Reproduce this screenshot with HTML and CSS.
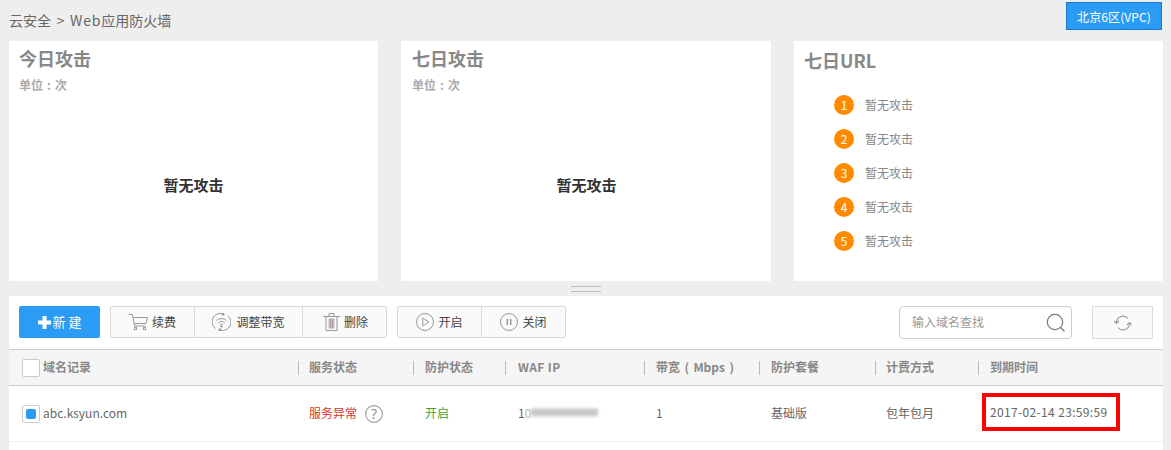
FILE: index.html
```html
<!DOCTYPE html>
<html lang="zh-CN">
<head>
<meta charset="utf-8">
<title>Web应用防火墙</title>
<link rel="stylesheet" href="styles.css">
</head>
<body>
<header class="topbar">
  <div class="crumbs">云安全 <span class="crumb-gt">&gt;</span> <span class="crumb-latin">Web</span>应用防火墙</div>
  <button class="region">北京6区(VPC)</button>
</header>
<section class="cards">
  <article class="card">
    <h2 class="card-title">今日攻击</h2>
    <div class="unit">单位<span class="colon">:</span>次</div>
    <div class="empty">暂无攻击</div>
  </article>
  <article class="card">
    <h2 class="card-title">七日攻击</h2>
    <div class="unit">单位<span class="colon">:</span>次</div>
    <div class="empty">暂无攻击</div>
  </article>
  <article class="card">
    <h2 class="card-title card-title-url">七日URL</h2>
    <ol class="rank">
      <li class="rank-item"><span class="rank-no">1</span>暂无攻击</li>
      <li class="rank-item"><span class="rank-no">2</span>暂无攻击</li>
      <li class="rank-item"><span class="rank-no">3</span>暂无攻击</li>
      <li class="rank-item"><span class="rank-no">4</span>暂无攻击</li>
      <li class="rank-item"><span class="rank-no">5</span>暂无攻击</li>
    </ol>
  </article>
</section>
<div class="splitter"></div>
<section class="panel">
  <div class="toolbar">
    <button class="btn-new"><svg class="plus" viewBox="0 0 13 13"><path d="M4.5 0h4v4.5H13v4H8.500V13h-4V8.500H0v-4h4.500z"/></svg>新 建</button>
    <div class="group">
      <button class="tool tool-a">
        <svg class="ico" width="19" height="16" viewBox="0 0 19 16" fill="none" stroke="#999" stroke-width="1"><path d="M0 .5h3.500l2 11.500h11M4 3.500h14.500l-1.500 6H5"/><rect x="5.500" y="13.500" width="2" height="2"/><rect x="14.500" y="13.500" width="2" height="2"/></svg>续费
      </button>
      <button class="tool tool-b">
        <svg class="ico ico-wide" width="19" height="18" viewBox="0 0 19 18" fill="none" stroke="#999" stroke-width="1"><path d="M3.500 15.500A8.300 8.300 0 0 1 11 .9M15.500 2.500A8.300 8.300 0 0 1 8 17.100"/><path d="M10.500 0v2.400l2-1.200zM8.500 18v-2.400l-2 1.200z" fill="#999"/><path d="M4.500 7.500a7.300 7.300 0 0 1 10 0M6.300 9.700a4.600 4.600 0 0 1 6.400 0M8 11.700a2.200 2.200 0 0 1 3 0"/><circle cx="9.500" cy="13.500" r=".8" fill="#999"/></svg>调整带宽
      </button>
      <button class="tool tool-c">
        <svg class="ico" width="17" height="18" viewBox="0 0 17 18" fill="none" stroke="#999" stroke-width="1"><path d="M0 3.500h17M6 3.500V.5h5v3M3 3.500V17.500h11V3.500"/><rect x="5.500" y="5.500" width="6" height="10" fill="#bdbdbd" stroke="none"/><path d="M7.500 5.500v10M9.500 5.500v10" stroke="#a58f8f" stroke-width=".6"/></svg>删除
      </button>
    </div>
    <div class="group">
      <button class="tool tool-d">
        <svg class="ico" width="18" height="18" viewBox="0 0 18 18" fill="none" stroke="#999" stroke-width="1"><circle cx="9" cy="9" r="8.500"/><path d="M6.800 5v8l6-4z"/></svg>开启
      </button>
      <button class="tool tool-e">
        <svg class="ico" width="18" height="18" viewBox="0 0 18 18" fill="none" stroke="#999" stroke-width="1"><circle cx="9" cy="9" r="8.500"/><path d="M7.300 6v6M10.700 6v6" stroke-width="1.500"/></svg>关闭
      </button>
    </div>
    <div class="search">
      <span class="search-text">输入域名查找</span>
      <svg width="20" height="20" viewBox="0 0 20 20" fill="none" stroke="#777" stroke-width="1.200"><circle cx="9" cy="9" r="7.700"/><path d="M14.500 14.500l4 4"/></svg>
    </div>
    <button class="refresh">
      <svg width="18" height="16" viewBox="0 0 18 16" fill="none" stroke="#999" stroke-width="1.100"><path d="M2.500 7.500A6.500 6.500 0 0 1 14 3.500M15.500 8.500A6.500 6.500 0 0 1 4 12.500"/><path d="M0 6l2.500 2.500L5 6M13 10l2.500-2.500L18 10"/></svg>
    </button>
  </div>
  <div class="table">
    <div class="row row-head">
      <div class="cell cell-first"><span class="check"></span>域名记录</div>
      <div class="cell"><span class="sep sep-tight"></span>服务状态</div>
      <div class="cell"><span class="sep"></span>防护状态</div>
      <div class="cell"><span class="sep sep-wide"></span><span class="head-waf">WAF IP</span></div>
      <div class="cell"><span class="sep"></span><span class="head-band">带宽 ( Mbps )</span></div>
      <div class="cell"><span class="sep"></span>防护套餐</div>
      <div class="cell"><span class="sep sep-tight"></span>计费方式</div>
      <div class="cell"><span class="sep"></span>到期时间</div>
    </div>
    <div class="row row-body">
      <div class="cell cell-first"><span class="check check-on"><i class="dot"></i></span>abc.ksyun.com</div>
      <div class="cell cell-tight"><span class="status-bad">服务异常</span><svg class="help" width="18" height="18" viewBox="0 0 18 18" fill="none"><circle cx="9" cy="9" r="8.400" stroke="#999" stroke-width="1.100"/><text x="9" y="13.500" text-anchor="middle" class="help-q">?</text></svg></div>
      <div class="cell cell-pad"><span class="status-ok">开启</span></div>
      <div class="cell cell-ip">1<span class="ip-mask">0</span><span class="ip-blur"></span></div>
      <div class="cell cell-pad">1</div>
      <div class="cell cell-pad">基础版</div>
      <div class="cell cell-tight">包年包月</div>
      <div class="cell cell-date"><span class="date-box">2017-02-14 23:59:59</span></div>
    </div>
  </div>
</section>
</body>
</html>
```
FILE: styles.css
```css
* { box-sizing: border-box; }
html, body { margin: 0; height: 100%; }
body {
  width: 1171px;
  height: 450px;
  overflow: hidden;
  background: #eee;
  font-family: "Noto Sans CJK SC", "Open Sans", sans-serif;
  font-size: 12px;
  color: #666;
  padding: 0 8px 0 9px;
}
button { font-family: inherit; cursor: pointer; padding: 0; }

.topbar {
  height: 41px;
  display: flex;
  justify-content: space-between;
  align-items: flex-start;
}
.crumbs { font-size: 14px; line-height: 20px; margin-top: 10px; color: #666; word-spacing: 2.500px; }
.crumb-latin { letter-spacing: .8px; }
.region {
  width: 96px;
  height: 28px;
  margin: 2px 1px 0 0;
  background: #2b9cf5;
  border: 1px solid #1d78d2;
  color: #fff;
  font-size: 12px;
  letter-spacing: .1px;
}

.cards {
  display: grid;
  grid-template-columns: 369px 370px 369px;
  column-gap: 23px;
  height: 240px;
}
.card { background: #fff; padding: 4px 10px; }
.card:nth-child(2) { padding-left: 11px; }
.card-title { margin: 0; font-size: 18px; line-height: 26px; font-weight: 700; color: #888; }
.card-title-url { margin-top: 2px; }
.unit { font-size: 12px; line-height: 18px; margin-top: 5px; font-weight: 700; color: #aaa; }
.colon { display: inline-block; width: 12px; text-align: center; }
.empty {
  margin-top: 81px;
  text-align: center;
  font-size: 15px;
  line-height: 20px;
  font-weight: 700;
  color: #333;
}
.rank { list-style: none; margin: 14px 0 0; padding: 0 0 0 30px; }
.rank-item { height: 34px; display: flex; align-items: center; color: #888; }
.rank-no {
  width: 20px;
  height: 20px;
  margin: 2px 11px 0 0;
  border-radius: 50%;
  background: #ff8a00;
  color: #fff;
  text-align: center;
  line-height: 20px;
}

.splitter {
  width: 30px;
  height: 6px;
  margin: 5px auto 4px 562px;
  border-top: 1px solid #bbb;
  border-bottom: 1px solid #bbb;
}

.panel { background: #fff; width: 1154px; height: 154px; }
.toolbar { display: flex; align-items: flex-start; padding: 10px 10px 0; height: 53px; }
.btn-new {
  width: 81px;
  height: 32px;
  padding-bottom: 2px;
  background: #2b9cf5;
  border: 0;
  border-radius: 2px;
  color: #fff;
  font-size: 13px;
  display: flex;
  align-items: center;
  justify-content: center;
  margin-right: 10px;
}
.plus { width: 13px; height: 13px; fill: #fff; margin: 2px 2px 0 0; }
.group {
  display: flex;
  height: 32px;
  margin-right: 10px;
  background: #fafafa;
  border: 1px solid #d9d9d9;
  border-radius: 2px;
}
.tool {
  display: flex;
  align-items: center;
  justify-content: center;
  height: 100%;
  padding-bottom: 2px;
  background: none;
  border: 0;
  border-left: 1px solid #d9d9d9;
  color: #444;
  font-size: 12px;
}
.tool:first-child { border-left: 0; }
.tool-a { width: 83px; }
.tool-b { width: 108px; }
.tool-c { width: 84px; padding-left: 2px; }
.tool-d { width: 83px; }
.tool-e { width: 84px; }
.ico { margin: 2px 4px 0 0; }
.ico-wide { margin-right: 5px; }
.search {
  width: 173px;
  height: 33px;
  margin-left: auto;
  border: 1px solid #ccc;
  border-radius: 4px;
  display: flex;
  align-items: center;
  justify-content: space-between;
  padding: 0 5px 0 12px;
  color: #999;
}
.search-text { margin-bottom: 2px; }
.refresh {
  width: 61px;
  height: 33px;
  margin-left: 20px;
  background: #fafafa;
  border: 1px solid #ddd;
  display: flex;
  align-items: center;
  justify-content: center;
}

.row {
  display: grid;
  grid-template-columns: 289px 115px 92px 139px 115px 116px 103px 185px;
  align-items: center;
}
.row-head {
  height: 37px;
  background: #f5f5f5;
  border-top: 1px solid #ccc;
  border-bottom: 1px solid #ccc;
  font-weight: 700;
  color: #888;
}
.row-body { height: 56px; border-bottom: 1px solid #eee; color: #666; }
.cell { display: flex; align-items: center; padding-bottom: 2px; }
.cell-first { padding-left: 13px; }
.cell-pad { padding-left: 12px; }
.cell-tight { padding-left: 11px; }
.cell-ip { padding-left: 13px; }
.sep { width: 1px; height: 14px; background: #bbb; margin: 2px 11px 0 0; }
.sep-tight { margin-right: 10px; }
.sep-wide { margin-right: 12px; }
.head-waf { letter-spacing: .35px; }
.head-band { word-spacing: 1.700px; }
.check {
  width: 18px;
  height: 18px;
  margin: 2px 3px 0 0;
  border: 1px solid #ccc;
  border-radius: 2px;
  background: #fff;
  display: flex;
  align-items: center;
  justify-content: center;
}
.dot { width: 10px; height: 10px; border-radius: 2px; background: #2b9cf5; }
.status-bad { color: #d9342b; }
.status-ok { color: #3aa635; }
.help { margin: 2px 0 0 8px; }
.help-q { font-size: 14px; fill: #888; font-family: "Open Sans", sans-serif; }
.ip-mask { opacity: .5; }
.ip-blur {
  width: 67px;
  height: 9px;
  background: linear-gradient(#e2e2e2, #bbb 45%, #e2e2e2);
  filter: blur(1.500px);
}
.cell-date { padding: 0 0 3px 4px; }
.date-box {
  display: block;
  width: 138px;
  height: 38px;
  line-height: 30px;
  padding-left: 4px;
  border: 4px solid #f00;
  white-space: nowrap;
  letter-spacing: .35px;
}
```
